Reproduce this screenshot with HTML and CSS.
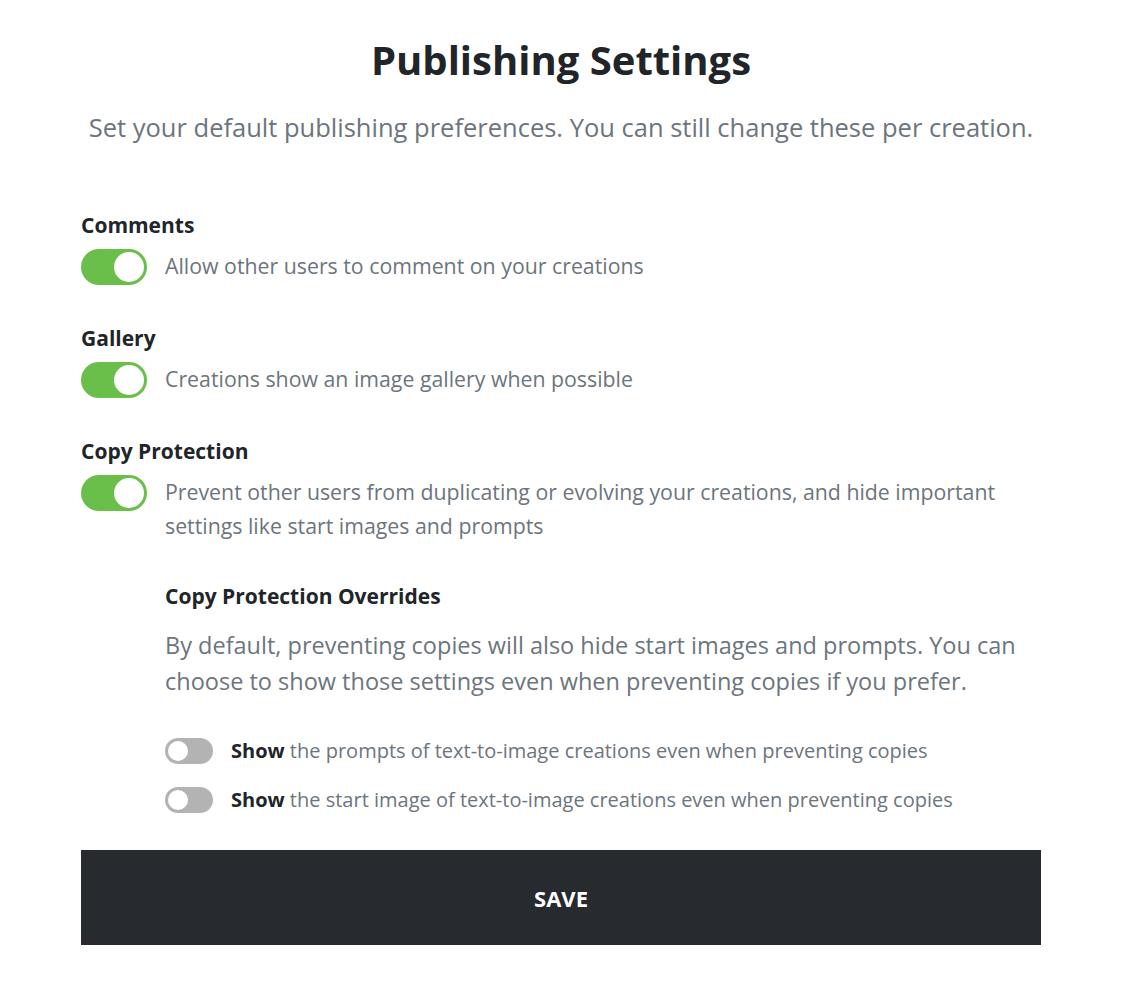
FILE: index.html
```html
<!DOCTYPE html>
<html lang="en">
<head>
<meta charset="utf-8">
<title>Publishing Settings</title>
<link rel="stylesheet" href="styles.css">
</head>
<body>
<main class="page">
  <h1 class="title">Publishing Settings</h1>
  <p class="subtitle">Set your default publishing preferences. You can still change these per creation.</p>

  <section class="setting first">
    <h2 class="label">Comments</h2>
    <div class="row">
      <span class="toggle on"><span class="knob"></span></span>
      <p class="desc">Allow other users to comment on your creations</p>
    </div>
  </section>

  <section class="setting">
    <h2 class="label">Gallery</h2>
    <div class="row">
      <span class="toggle on"><span class="knob"></span></span>
      <p class="desc">Creations show an image gallery when possible</p>
    </div>
  </section>

  <section class="setting">
    <h2 class="label">Copy Protection</h2>
    <div class="row">
      <span class="toggle on"><span class="knob"></span></span>
      <p class="desc">Prevent other users from duplicating or evolving your creations, and hide important settings like start images and prompts</p>
    </div>
  </section>

  <section class="overrides">
    <h3 class="sublabel">Copy Protection Overrides</h3>
    <p class="para">By default, preventing copies will also hide start images and prompts. You can choose to show those settings even when preventing copies if you prefer.</p>
    <div class="small-row first-small">
      <span class="toggle small"><span class="knob"></span></span>
      <p class="small-desc"><b>Show</b> the prompts of text-to-image creations even when preventing copies</p>
    </div>
    <div class="small-row">
      <span class="toggle small"><span class="knob"></span></span>
      <p class="small-desc"><b>Show</b> the start image of text-to-image creations even when preventing copies</p>
    </div>
  </section>

  <button class="save" type="button">SAVE</button>
</main>
</body>
</html>
```

FILE: styles.css
```css
html, body {
  margin: 0;
  padding: 0;
  background: #ffffff;
}

body {
  font-family: "Open Sans", "Noto Sans", sans-serif;
  color: #212529;
}

.page {
  width: 960px;
  margin-left: 81px;
  padding-top: 32px;
  display: flex;
  flex-direction: column;
}

.title {
  margin: 0;
  text-align: center;
  font-size: 40px;
  font-weight: 700;
  line-height: 56px;
  color: #212529;
}

.subtitle {
  margin: 21px 0 0;
  text-align: center;
  font-size: 25.5px;
  line-height: 36px;
  color: #6c757d;
}

.setting {
  margin-top: 39px;
}

.setting.first {
  margin-top: 66px;
}

.label {
  margin: 0;
  font-size: 21px;
  font-weight: 700;
  line-height: 28px;
  color: #212529;
}

.row {
  display: flex;
  align-items: flex-start;
  gap: 18px;
  margin-top: 10px;
}

.desc {
  margin: 0;
  font-size: 21.3px;
  line-height: 34px;
  color: #6c757d;
}

.toggle {
  position: relative;
  flex: none;
  display: inline-block;
  width: 66px;
  height: 36px;
  border-radius: 18px;
  background: #b3b3b3;
}

.toggle.on {
  background: #6abf4b;
}

.toggle .knob {
  position: absolute;
  top: 3px;
  left: 3px;
  width: 30px;
  height: 30px;
  border-radius: 50%;
  background: #ffffff;
}

.toggle.on .knob {
  left: 33px;
}

.toggle.small {
  width: 48px;
  height: 26px;
  border-radius: 13px;
}

.toggle.small .knob {
  top: 3px;
  left: 3px;
  width: 20px;
  height: 20px;
}

.overrides {
  margin-left: 84px;
  margin-top: 39px;
  display: flex;
  flex-direction: column;
}

.sublabel {
  margin: 0;
  font-size: 21px;
  font-weight: 700;
  line-height: 28px;
  color: #212529;
}

.para {
  margin: 17px 0 0;
  font-size: 23.5px;
  line-height: 36px;
  color: #6c757d;
}

.small-row {
  display: flex;
  align-items: center;
  gap: 18px;
  margin-top: 21px;
}

.small-row.first-small {
  margin-top: 38px;
}

.small-desc {
  margin: 0;
  font-size: 20px;
  line-height: 28px;
  color: #6c757d;
}

.small-desc b {
  color: #212529;
  font-weight: 700;
}

.save {
  margin-top: 36px;
  width: 960px;
  height: 95px;
  border: none;
  background: #272a2f;
  color: #ffffff;
  font-family: "Open Sans", "Noto Sans", sans-serif;
  font-size: 22px;
  font-weight: 700;
  cursor: pointer;
}
```
